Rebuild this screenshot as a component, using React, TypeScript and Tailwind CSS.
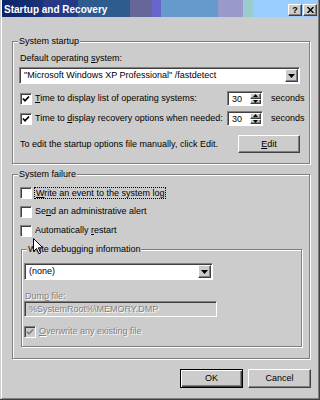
import React from "react";

const Box = ({ checked, disabled }: { checked?: boolean; disabled?: boolean }) => (
  <span
    className={`flex items-center justify-center w-[12px] h-[12px] shrink-0 border border-t-[#808080] border-l-[#808080] border-r-white border-b-white shadow-[inset_1px_1px_0_#404040] ${
      disabled ? "bg-[#cccccc]" : "bg-white"
    }`}
  >
    {checked && (
      <svg width="8" height="8" viewBox="0 0 8 8">
        <path d="M1 3.5 L3 5.8 L7 1.5" stroke={disabled ? "#808080" : "#000"} strokeWidth="1.7" fill="none" />
      </svg>
    )}
  </span>
);

const DownArrow = () => (
  <svg width="7" height="4" viewBox="0 0 7 4">
    <polygon points="0,0 7,0 3.5,4" fill="#000" />
  </svg>
);

const Raised = ({ className = "", children }: { className?: string; children?: React.ReactNode }) => (
  <div
    className={`flex items-center justify-center bg-[#cccccc] border border-t-white border-l-white border-r-[#404040] border-b-[#404040] shadow-[inset_-1px_-1px_0_#808080] ${className}`}
  >
    {children}
  </div>
);

const Combo = ({ text, className = "" }: { text: string; className?: string }) => (
  <div
    className={`flex items-stretch h-[17px] bg-white border border-t-[#808080] border-l-[#808080] border-r-white border-b-white shadow-[inset_1px_1px_0_#404040] p-[1px] pl-[2px] ${className}`}
  >
    <span className="flex-1 pl-[2px] leading-[13px] whitespace-nowrap overflow-hidden">{text}</span>
    <Raised className="w-[13px] h-[13px]">
      <DownArrow />
    </Raised>
  </div>
);

const Spinner = () => (
  <div className="flex w-[36px] h-[15px] bg-white border border-t-[#808080] border-l-[#808080] border-r-white border-b-white shadow-[inset_1px_1px_0_#404040] p-[1px]">
    <span className="flex-1 pl-[3px] leading-[12px]">30</span>
    <div className="flex flex-col w-[11px]">
      <Raised className="h-1/2">
        <svg width="5" height="3" viewBox="0 0 5 3">
          <polygon points="2.5,0 5,3 0,3" fill="#000" />
        </svg>
      </Raised>
      <Raised className="h-1/2">
        <svg width="5" height="3" viewBox="0 0 5 3">
          <polygon points="0,0 5,0 2.5,3" fill="#000" />
        </svg>
      </Raised>
    </div>
  </div>
);

const Group = ({ label, className = "", children }: { label: string; className?: string; children?: React.ReactNode }) => (
  <div className={`relative border border-[#808080] shadow-[inset_1px_1px_0_#fff,1px_1px_0_#fff] ${className}`}>
    <span className="absolute -top-[6px] left-[5px] px-[1px] bg-[#cccccc] leading-[11px] whitespace-nowrap">{label}</span>
    {children}
  </div>
);

const Dim = ({ children, className = "" }: { children: React.ReactNode; className?: string }) => (
  <span className={`text-[#808080] [text-shadow:1px_1px_0_#fff] ${className}`}>{children}</span>
);

export default function App() {
  return (
    <div className="w-[320px] h-[400px] bg-[#cccccc] border-r border-b border-r-[#404040] border-b-[#404040] pl-[1px] overflow-hidden font-['Liberation_Sans',Arial,sans-serif] text-[9px] leading-[11px] text-black">
      <div className="relative h-full flex flex-col border-l border-r border-b border-l-white border-r-[#808080] border-b-[#808080]">
        {/* title bar */}
        <div className="flex items-start justify-between h-[17px] pl-[2px] pr-[1px] bg-[linear-gradient(90deg,#0a246a_0px,#1a3276_40px,#263a86_42px,#263a86_76px,#2e5c8e_76px,#2e5c8e_128px,#666699_128px,#666699_150px,#6666cc_150px,#6666cc_159px,#6699cc_159px,#6699cc_216px,#9999cc_216px,#9999cc_241px,#99cccc_241px,#99cccc_251px,#99ccff_251px)]">
          <span className="pt-[1px] text-[10px] leading-[17px] font-bold text-white whitespace-nowrap">Startup and Recovery</span>
          <div className="flex gap-[1px] mt-[4px]">
            <Raised className="w-[14px] h-[12px]">
              <span className="text-[9px] leading-[9px] font-bold">?</span>
            </Raised>
            <Raised className="w-[14px] h-[12px]">
              <svg width="7" height="6" viewBox="0 0 7 6">
                <path d="M0.5 0 L6.5 6 M6.5 0 L0.5 6" stroke="#000" strokeWidth="1.4" />
              </svg>
            </Raised>
          </div>
        </div>

        {/* system startup */}
        <Group label="System startup" className="ml-[10px] mt-[24px] w-[298px] h-[123px]">
          <div className="flex flex-col pl-[7px] pt-[11px]">
            <span className="h-[11px]">
              Default operating <u>s</u>ystem:
            </span>
            <Combo text={'"Microsoft Windows XP Professional" /fastdetect'} className="mt-[3px] -ml-[1px] w-[281px]" />
            <div className="flex items-center h-[15px] mt-[7px]">
              <div className="flex items-center gap-[3px] w-[207px]">
                <Box checked />
                <span>
                  <u>T</u>ime to display list of operating systems:
                </span>
              </div>
              <Spinner />
              <span className="ml-[8px]">seconds</span>
            </div>
            <div className="flex items-center h-[15px] mt-[5px]">
              <div className="flex items-center gap-[3px] w-[207px]">
                <Box checked />
                <span>
                  Time to <u>d</u>isplay recovery options when needed:
                </span>
              </div>
              <Spinner />
              <span className="ml-[8px]">seconds</span>
            </div>
            <div className="flex items-center justify-between w-[280px] h-[18px] mt-[9px]">
              <span>To edit the startup options file manually, click Edit.</span>
              <Raised className="w-[62px] h-[18px]">
                <span>
                  <u>E</u>dit
                </span>
              </Raised>
            </div>
          </div>
        </Group>

        {/* system failure */}
        <Group label="System failure" className="ml-[10px] mt-[10px] w-[298px] h-[185px]">
          <div className="flex flex-col pl-[7px] pt-[11px]">
            <div className="flex items-center gap-[2px] h-[13px]">
              <Box />
              <span className="border border-dotted border-black px-[1px] leading-[10px]">
                <u>W</u>rite an event to the system log
              </span>
            </div>
            <div className="flex items-center gap-[3px] h-[13px] mt-[6px]">
              <Box />
              <span>
                Se<u>n</u>d an administrative alert
              </span>
            </div>
            <div className="flex items-center gap-[3px] h-[13px] mt-[6px]">
              <Box />
              <span>
                Automatically <u>r</u>estart
              </span>
            </div>

            <Group label="Write debugging information" className="ml-[1px] mt-[12px] w-[281px] h-[98px]">
              <div className="flex flex-col pl-[2px] pt-[13px]">
                <Combo text="(none)" className="w-[189px]" />
                <Dim className="block mt-[11px] pl-[1px] leading-[10px]">
                  Dum<u>p</u> file:
                </Dim>
                <div className="flex items-center w-[193px] h-[16px] pl-[4px] border border-t-[#808080] border-l-[#808080] border-r-white border-b-white shadow-[inset_1px_1px_0_#404040]">
                  <Dim>%SystemRoot%\MEMORY.DMP</Dim>
                </div>
                <div className="flex items-center gap-[3px] h-[13px] mt-[8px]">
                  <Box checked disabled />
                  <Dim>
                    <u>O</u>verwrite any existing file
                  </Dim>
                </div>
              </div>
            </Group>
          </div>
        </Group>

        {/* buttons */}
        <div className="flex justify-end gap-[5px] pr-[7px] mt-[10px]">
          <div className="w-[63px] h-[19px] border border-black bg-[#cccccc] flex items-center justify-center shadow-[inset_1px_1px_0_#fff,inset_-1px_-1px_0_#404040,inset_-2px_-2px_0_#808080]">
            OK
          </div>
          <Raised className="w-[63px] h-[19px]">Cancel</Raised>
        </div>

        {/* mouse pointer */}
        <svg className="absolute left-[31px] top-[238px]" width="11" height="17" viewBox="0 0 11 17">
          <path d="M0.5 0.5 L0.5 13.5 L3.5 10.5 L5.8 15.8 L7.6 15 L5.4 9.8 L9.8 9.8 Z" fill="#fff" stroke="#000" strokeWidth="1" />
        </svg>
      </div>
    </div>
  );
}
